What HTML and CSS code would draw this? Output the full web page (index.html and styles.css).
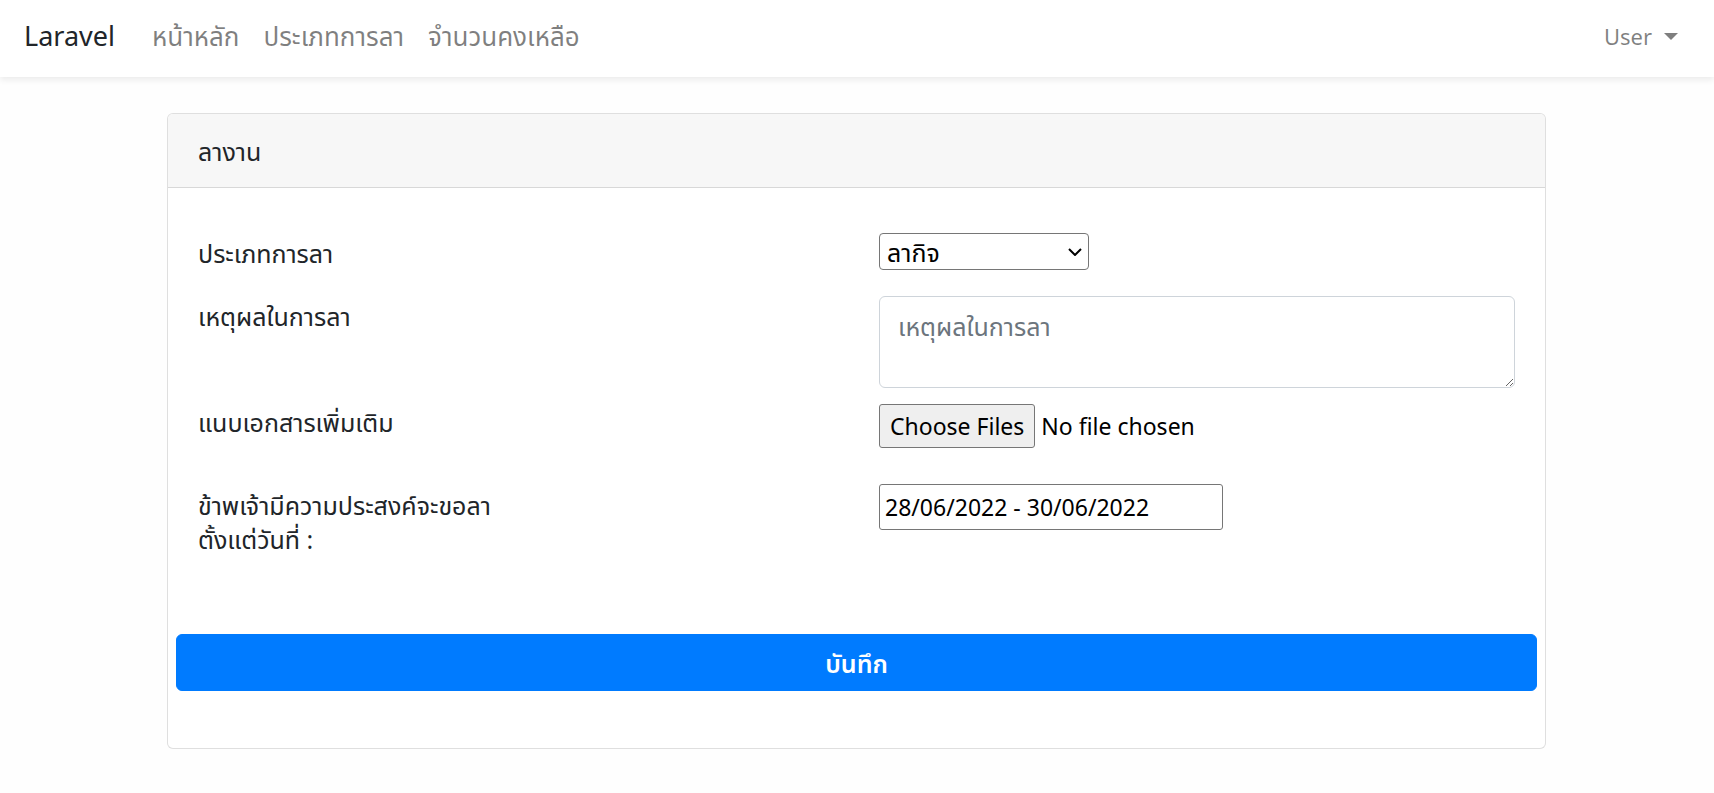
FILE: index.html
```html
<!DOCTYPE html>
<html lang="th">
<head>
<meta charset="utf-8">
<title>ลางาน</title>
<link rel="stylesheet" href="styles.css">
</head>
<body>
<nav class="navbar">
  <a class="brand" href="#">Laravel</a>
  <ul class="nav-links">
    <li><a href="#">หน้าหลัก</a></li>
    <li><a href="#">ประเภทการลา</a></li>
    <li><a href="#">จำนวนคงเหลือ</a></li>
  </ul>
  <div class="user-menu">
    <a href="#">User <span class="caret"></span></a>
  </div>
</nav>

<main class="page">
  <section class="card">
    <div class="card-header">ลางาน</div>
    <div class="card-body">
      <form class="leave-form">
        <div class="fields">
          <div class="field field-type">
            <label class="label">ประเภทการลา</label>
            <div class="control">
              <div class="select-wrap">
                <select class="select">
                  <option>ลากิจ</option>
                  <option>ลาป่วย</option>
                  <option>ลาพักร้อน</option>
                </select>
                <svg class="chevron" width="14" height="8" viewBox="0 0 14 8" aria-hidden="true"><path d="M1 1 L7 7 L13 1" fill="none" stroke="#000" stroke-width="2"/></svg>
              </div>
            </div>
          </div>
          <div class="field field-reason">
            <label class="label">เหตุผลในการลา</label>
            <div class="control">
              <textarea class="textarea" placeholder="เหตุผลในการลา"></textarea>
            </div>
          </div>
          <div class="field field-file">
            <label class="label">แนบเอกสารเพิ่มเติม</label>
            <div class="control">
              <input class="file" type="file" multiple>
            </div>
          </div>
          <div class="field field-date">
            <label class="label">ข้าพเจ้ามีความประสงค์จะขอลา<br>ตั้งแต่วันที่ :</label>
            <div class="control">
              <input class="date" type="text" value="28/06/2022 - 30/06/2022">
            </div>
          </div>
        </div>
        <button type="button" class="submit">บันทึก</button>
      </form>
    </div>
  </section>
</main>
</body>
</html>
```

FILE: styles.css
```css
* { box-sizing: border-box; }

html, body {
  margin: 0;
  padding: 0;
}

body {
  background: #fefefe;
  color: #212529;
  font-family: "Segoe UI", "Leelawadee UI", "Noto Sans", "Noto Sans Thai", "Open Sans", sans-serif;
  font-size: 25px;
  line-height: 34px;
}

a { text-decoration: none; }

.navbar {
  height: 77px;
  background: #fff;
  box-shadow: 0 3px 6px rgba(0, 0, 0, 0.075);
  display: flex;
  align-items: center;
  padding: 0 24px 5px;
}

.brand {
  color: #212529;
  font-size: 27px;
  margin-right: 25px;
}

.nav-links {
  display: flex;
  list-style: none;
  margin: 0;
  padding: 0;
  font-size: 26px;
}

.nav-links a {
  display: block;
  color: rgba(0, 0, 0, 0.5);
  padding: 0 12px;
}

.user-menu {
  margin-left: auto;
  font-size: 22px;
}

.user-menu a {
  display: flex;
  align-items: center;
  color: rgba(0, 0, 0, 0.5);
  padding: 0 12px;
}

.caret {
  display: inline-block;
  margin-left: 12px;
  border-top: 7px solid rgba(0, 0, 0, 0.5);
  border-left: 7px solid transparent;
  border-right: 7px solid transparent;
}

.page {
  padding: 36px 0 40px 167px;
}

.card {
  width: 1379px;
  background: #fff;
  border: 1px solid rgba(0, 0, 0, 0.125);
  border-radius: 6px;
}

.card-header {
  background: #f7f7f7;
  border-bottom: 1px solid rgba(0, 0, 0, 0.125);
  border-radius: 5px 5px 0 0;
  padding: 20px 30px 19px;
}

.card-body {
  padding: 45px 8px 57px;
}

.fields {
  padding: 0 22px 0 22px;
}

.field {
  display: grid;
  grid-template-columns: 636px 636px;
  column-gap: 45px;
  align-items: start;
}

.field-type { margin-bottom: 26px; }
.field-type .label { padding-top: 3px; }

.field-reason { margin-bottom: 16px; }
.field-reason .label { padding-top: 3px; }

.field-file { margin-bottom: 36px; }
.field-file .label { padding-top: 1px; }

.field-date { margin-bottom: 78px; }
.field-date .label { padding-top: 4px; }

.label {
  display: block;
}

.select-wrap {
  position: relative;
  width: 210px;
}

.select {
  display: block;
  width: 210px;
  height: 37px;
  font: inherit;
  font-size: 25px;
  line-height: 34px;
  color: #000;
  background: #fff;
  border: 1px solid #767676;
  border-radius: 4px;
  padding: 0 30px 0 7px;
  appearance: none;
  -webkit-appearance: none;
}

.chevron {
  position: absolute;
  right: 7px;
  top: 15px;
  pointer-events: none;
}

.textarea {
  display: block;
  width: 636px;
  height: 92px;
  font: inherit;
  color: #495057;
  background: #fff;
  border: 1px solid #ced4da;
  border-radius: 6px;
  padding: 12px 18px;
  resize: vertical;
}

.textarea::placeholder {
  color: #6c757d;
}

.file {
  font: inherit;
  font-size: 23px;
  color: #000;
  height: 44px;
}

.file::file-selector-button {
  font: inherit;
  height: 44px;
  padding: 0 10px;
  margin-right: 6px;
  background: #efefef;
  color: #000;
  border: 1px solid #767676;
  border-radius: 3px;
}

.date {
  display: block;
  width: 344px;
  height: 46px;
  font: inherit;
  font-size: 23px;
  color: #000;
  border: 1px solid #767676;
  border-radius: 3px;
  padding: 0 5px;
}

.submit {
  display: block;
  width: 100%;
  height: 57px;
  font: inherit;
  font-weight: 600;
  color: #fff;
  background: #007bff;
  border: 1px solid #007bff;
  border-radius: 6px;
  cursor: pointer;
}
```
